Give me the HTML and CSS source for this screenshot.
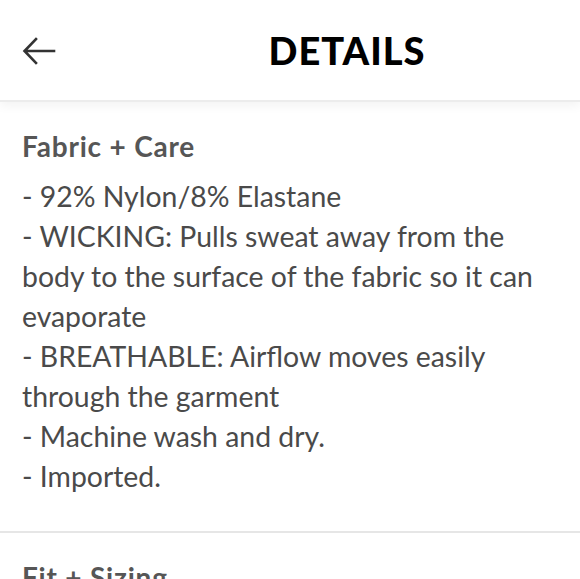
FILE: index.html
```html
<!DOCTYPE html>
<html>
<head>
<meta charset="utf-8">
<link rel="stylesheet" href="styles.css">
</head>
<body>
<header class="header">
  <button class="back" aria-label="Back">
    <svg width="34" height="30" viewBox="0 0 34 30"><path d="M32 15H3M14 3L2.5 15L14 27" fill="none" stroke="#333" stroke-width="2.6" stroke-linecap="square"/></svg>
  </button>
  <h1 class="title">DETAILS</h1>
</header>
<section class="section">
  <h2 class="section-title">Fabric + Care</h2>
  <div class="section-body">
    <p>- 92% Nylon/8% Elastane</p>
    <p>- WICKING: Pulls sweat away from the body to the surface of the fabric so it can evaporate</p>
    <p>- BREATHABLE: Airflow moves easily through the garment</p>
    <p>- Machine wash and dry.</p>
    <p>- Imported.</p>
  </div>
</section>
<section class="section">
  <h2 class="section-title">Fit + Sizing</h2>
</section>
</body>
</html>
```
FILE: styles.css
```css
* { box-sizing: border-box; }
html, body { margin: 0; padding: 0; background: #fff; overflow: hidden; }
body { font-family: "Lato", "Open Sans", sans-serif; color: #4a4a4a; }
.header {
  height: 102px;
  display: flex;
  align-items: center;
  border-bottom: 2px solid #ececec;
  box-shadow: 0 4px 10px rgba(0,0,0,0.05);
  position: relative;
}
.back {
  border: none;
  background: none;
  padding: 0;
  margin-left: 22px;
  margin-top: 2px;
  width: 34px;
  height: 30px;
  display: flex;
}
.title {
  flex: 1;
  margin: 0 0 0 118px;
  text-align: center;
  font-size: 38px;
  font-weight: 900;
  color: #000;
  letter-spacing: 1px;
  margin-right: 60px;
}
.section {
  padding: 24px 22px 35px;
  border-bottom: 2px solid #e6e6e6;
}
.section-title {
  margin: 0 0 10px;
  font-size: 28px;
  font-weight: 700;
  letter-spacing: 0.8px;
  color: #565656;
  line-height: 40px;
}
.section-body p {
  margin: 0;
  font-size: 28.4px;
  line-height: 40px;
  max-width: 536px;
}
```
